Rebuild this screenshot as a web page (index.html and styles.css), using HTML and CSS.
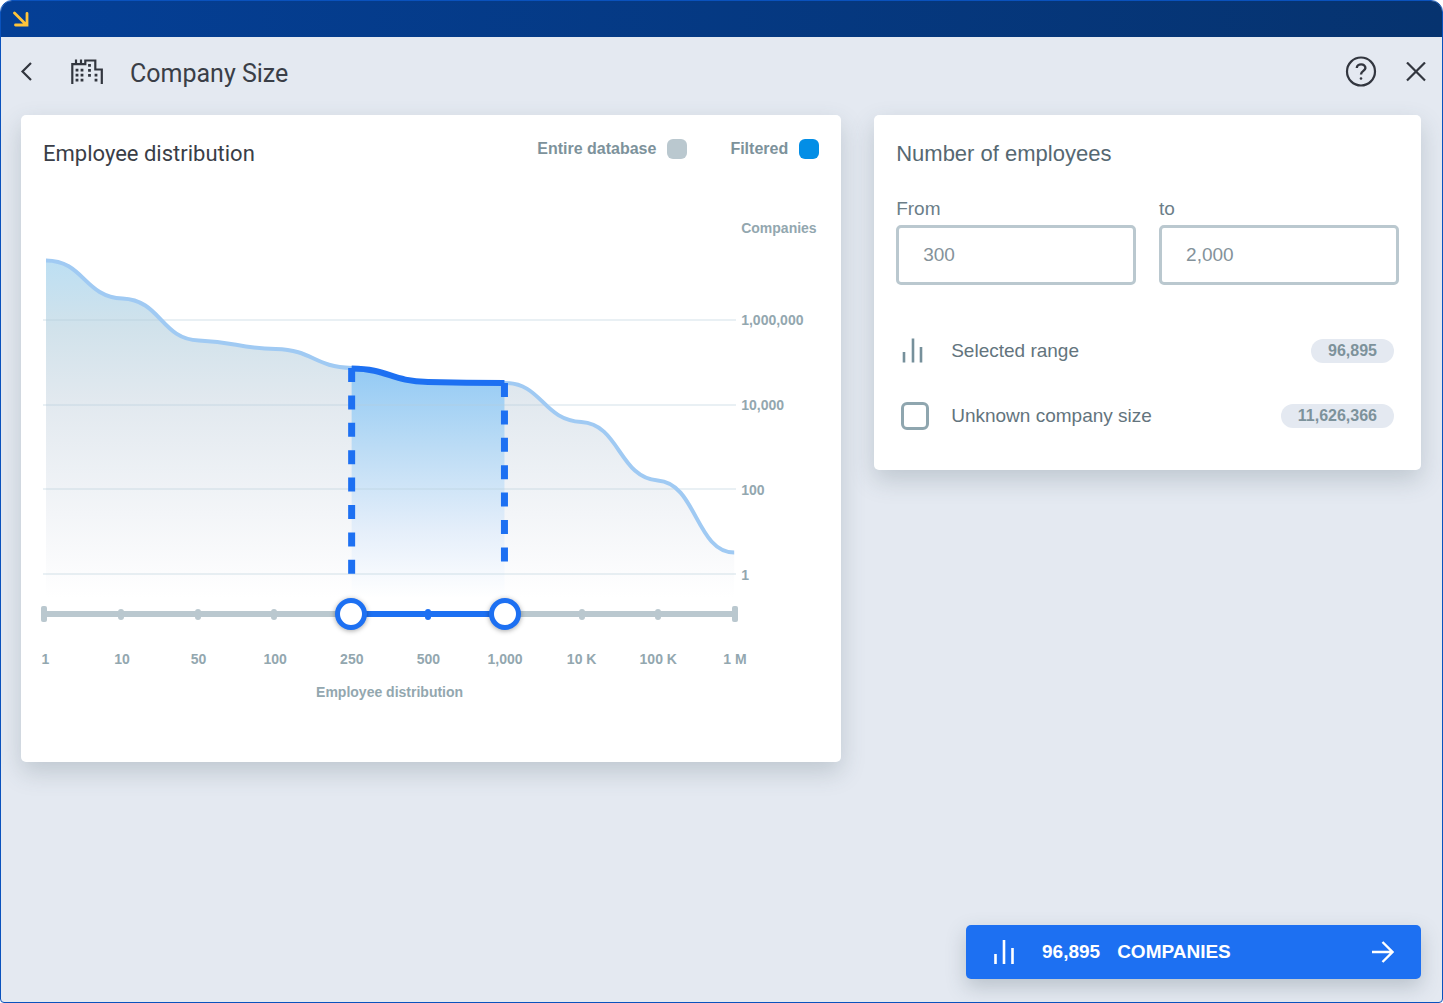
FILE: index.html
```
<!DOCTYPE html>
<html lang="en">
<head>
    <meta charset="UTF-8">
    <meta name="viewport" content="width=device-width, initial-scale=1.0">
    <title>Company Size</title>
    <link rel="stylesheet" href="styles.css">
</head>
<body>
    <div class="window">
        <div class="titlebar">
            <svg class="logo" width="16" height="16" viewBox="0 0 16 16">
                <path d="M1.500 2L12.500 13M2.500 14H14V2.500" fill="none" stroke="#ffc43a" stroke-width="2.800" stroke-linecap="round" />
            </svg>
        </div>
        <header class="header">
            <button type="button" class="icon-button" aria-label="Back">
                <svg width="14" height="20" viewBox="0 0 14 20">
                    <path d="M12 1L3.500 9.500L12 18" fill="none" stroke="#32363f" stroke-width="2.200" />
                </svg>
            </button>
            <svg class="buildings" width="34" height="28" viewBox="0 0 34 28">
                <path d="M2.300 26V6.200H15.300V2.500H25.300V11.500H31.800V26M6 1.500V6M11 1.500V6M15.300 1.500V6" fill="none" stroke="#32363f" stroke-width="2.200" />
                <path d="M7 10.700V24M12 10.700V24M19.500 6V19M26 15.700V24" fill="none" stroke="#32363f" stroke-width="2.800" stroke-dasharray="2.800 2.200" />
            </svg>
            <h1>Company Size</h1>
            <button type="button" class="icon-button help" aria-label="Help">
                <svg width="32" height="32" viewBox="0 0 32 32" fill="none" stroke="#32363f">
                    <circle cx="16" cy="15.500" r="14" stroke-width="2.200" />
                    <path d="M11.800 12C12 7 20.600 7.300 20.400 12.200C20.200 15.100 16 14.800 16 18.500" stroke-width="2.400" />
                    <circle cx="16" cy="22.500" r="1.300" fill="#32363f" stroke="none" />
                </svg>
            </button>
            <button type="button" class="icon-button" aria-label="Close">
                <svg width="20" height="20" viewBox="0 0 20 20">
                    <path d="M1 .5L19 18.500M19 .5L1 18.500" fill="none" stroke="#32363f" stroke-width="2.200" />
                </svg>
            </button>
        </header>
        <main class="content">
            <section class="card distribution">
                <div class="card-header">
                    <h2>Employee distribution</h2>
                    <ul class="legend">
                        <li>Entire database <span class="swatch"></span></li>
                        <li>Filtered <span class="swatch filtered"></span></li>
                    </ul>
                </div>
                <div class="chart">
                    <div class="plot">
                        <svg class="curve" viewBox="0 0 694 380" preserveAspectRatio="none">
                            <defs>
                                <linearGradient id="all" gradientUnits="userSpaceOnUse" x1="0" y1="42" x2="0" y2="380">
                                    <stop offset="0" stop-color="#bcdff3" />
                                    <stop offset="0.2" stop-color="#d1e2eb" />
                                    <stop offset="0.42" stop-color="#e2e9ef" />
                                    <stop offset="0.75" stop-color="#f3f5f8" />
                                    <stop offset="1" stop-color="#ffffff" />
                                </linearGradient>
                                <linearGradient id="range" gradientUnits="userSpaceOnUse" x1="0" y1="150" x2="0" y2="380">
                                    <stop offset="0" stop-color="#93caf4" />
                                    <stop offset="0.35" stop-color="#bcdcf5" />
                                    <stop offset="0.7" stop-color="#e4eefa" />
                                    <stop offset="1" stop-color="#ffffff" />
                                </linearGradient>
                            </defs>
                            <path fill="url(#all)" d="M3 42.500C41 42.500 41 79 79.500 80.500C118 82 118 121 156 122.500C194 124 194 130 233 131C271 132 271 149 309 150C347 151 347 163 385.500 164C424 165 424 165 462 165C500 165 500 202 539 204C577 206 577 260 615.500 262.500C654 265 654 334.500 692 334.500V380H3Z" />
                            <path fill="url(#range)" d="M309 150C347 151 347 163 385.500 164C424 165 424 165 462 165V380H309Z" />
                            <path class="gridlines" d="M0 102H694M0 187H694M0 271H694M0 356H694" />
                            <path class="line" d="M3 42.500C41 42.500 41 79 79.500 80.500C118 82 118 121 156 122.500C194 124 194 130 233 131C271 132 271 149 309 150C347 151 347 163 385.500 164C424 165 424 165 462 165C500 165 500 202 539 204C577 206 577 260 615.500 262.500C654 265 654 334.500 692 334.500" />
                            <path class="line selected" d="M309 150.500C347 151 347 163 385.500 164C424 165 424 165 462 165" />
                            <path class="bound" d="M309 150V357M462 165V344" />
                        </svg>
                        <div class="slider">
                            <div class="track">
                                <div class="track-range" style="left: 44.4%; width: 22.2%"></div>
                            </div>
                            <div class="ticks">
                                <span class="end"></span>
                                <span></span>
                                <span></span>
                                <span></span>
                                <span></span>
                                <span class="active"></span>
                                <span></span>
                                <span></span>
                                <span></span>
                                <span class="end"></span>
                            </div>
                            <input type="range" min="0" max="9" value="4" aria-label="Minimum employees">
                            <input type="range" min="0" max="9" value="6" aria-label="Maximum employees">
                        </div>
                        <ol class="x-axis">
                            <li>1</li>
                            <li>10</li>
                            <li>50</li>
                            <li>100</li>
                            <li>250</li>
                            <li>500</li>
                            <li>1,000</li>
                            <li>10 K</li>
                            <li>100 K</li>
                            <li>1 M</li>
                        </ol>
                        <p class="caption">Employee distribution</p>
                    </div>
                    <div class="y-axis">
                        <h3>Companies</h3>
                        <ol>
                            <li>1,000,000</li>
                            <li>10,000</li>
                            <li>100</li>
                            <li>1</li>
                        </ol>
                    </div>
                </div>
            </section>
            <section class="card employees">
                <h2>Number of employees</h2>
                <form class="range-form">
                    <div class="field">
                        <label for="from">From</label>
                        <input type="text" id="from" name="from" value="300">
                    </div>
                    <div class="field">
                        <label for="to">to</label>
                        <input type="text" id="to" name="to" value="2,000">
                    </div>
                </form>
                <div class="row">
                    <svg width="28" height="28" viewBox="0 0 28 28">
                        <path d="M3 15V25.500M12 1.500V25.500M20 10V25.500" fill="none" stroke="#76909b" stroke-width="2.600" />
                    </svg>
                    <span>Selected range</span>
                    <span class="badge">96,895</span>
                </div>
                <div class="row">
                    <input type="checkbox" id="unknown" name="unknown">
                    <label for="unknown">Unknown company size</label>
                    <span class="badge">11,626,366</span>
                </div>
            </section>
        </main>
        <footer class="footer">
            <button type="button" class="companies-button">
                <svg width="28" height="28" viewBox="0 0 28 28">
                    <path d="M4.500 16V26M13 2V26M21.500 10V26" fill="none" stroke="#ffffff" stroke-width="2.600" />
                </svg>
                <span>96,895</span>
                <span>COMPANIES</span>
                <svg class="arrow" width="22" height="22" viewBox="0 0 22 22">
                    <path d="M0 11H21M10.500 1L20.500 11L10.500 21" fill="none" stroke="#ffffff" stroke-width="2.400" />
                </svg>
            </button>
        </footer>
    </div>
</body>
</html>
```
FILE: styles.css
```
* {
    box-sizing: border-box;
}
body {
    margin: 0;
    font-family: "Liberation Sans", Arial, sans-serif;
    color: #566872;
    background-color: white;
}
h1, h2, h3, p, ul, ol {
    margin: 0;
    padding: 0;
    font-weight: normal;
    list-style: none;
}
svg {
    display: block;
    flex-shrink: 0;
}
.window {
    display: flex;
    flex-direction: column;
    min-height: 100vh;
    border: 1px solid #0a52bd;
    border-radius: 12px 12px 4px 4px;
    background-color: #e4e9f1;
    overflow: hidden;
}
.titlebar {
    height: 36px;
    padding: 10px 12px;
    background: linear-gradient(to right, #043f96, #06336f);
}
.header {
    display: flex;
    align-items: center;
    height: 78px;
    padding: 0 16px 8px 18px;
}
.icon-button {
    padding: 0;
    border: none;
    background: none;
    cursor: pointer;
}
.buildings {
    margin-left: 37px;
}
h1 {
    margin-left: 26px;
    padding-top: 4px;
    font-family: Roboto, sans-serif;
    font-size: 25px;
    line-height: 30px;
    color: #3a3e47;
}
.help {
    margin-left: auto;
    margin-right: 29px;
}
.content {
    display: grid;
    grid-template-columns: 3fr 2fr;
    gap: 33px;
    align-items: start;
    padding: 0 21px 0 20px;
}
.card {
    padding: 24px 22px;
    border-radius: 5px;
    background-color: white;
    box-shadow: 0 10px 24px rgba(60, 80, 90, 0.22);
}
h2 {
    font-size: 22px;
    line-height: 30px;
}
.distribution {
    padding-bottom: 60px;
}
.distribution h2 {
    font-family: Roboto, sans-serif;
    color: #3a3e47;
}
.card-header {
    display: flex;
    justify-content: space-between;
    align-items: flex-start;
}
.legend {
    display: flex;
    gap: 43px;
}
.legend li {
    display: flex;
    align-items: center;
    gap: 11px;
    font-size: 16px;
    font-weight: bold;
    line-height: 20px;
    color: #7d929b;
}
.swatch {
    width: 20px;
    height: 20px;
    border-radius: 6px;
    background-color: #bac8cf;
}
.swatch.filtered {
    background-color: #038ee6;
}
.chart {
    display: grid;
    grid-template-columns: 1fr 78px;
    gap: 5px;
    margin-top: 49px;
    line-height: 20px;
    color: #93a7af;
}
.chart h3, .chart li, .caption {
    font-size: 14px;
    font-weight: bold;
}
.curve {
    width: 100%;
    height: 380px;
}
.gridlines {
    fill: none;
    stroke: rgba(180, 202, 218, 0.4);
    stroke-width: 1.5;
}
.line {
    fill: none;
    stroke: #a0caf3;
    stroke-width: 4;
}
.line.selected {
    stroke: #1d70f2;
    stroke-width: 6;
}
.bound {
    fill: none;
    stroke: #1d70f2;
    stroke-width: 7;
    stroke-dasharray: 14 13.4;
}
.slider {
    position: relative;
    height: 32px;
    margin: 0 -2px;
    padding: 8px 0;
}
.track {
    position: absolute;
    top: 13px;
    left: 3px;
    right: 3px;
    height: 6px;
    background-color: #bac8cf;
}
.track-range {
    position: absolute;
    height: 6px;
    background-color: #1d70f2;
}
.ticks {
    position: relative;
    display: flex;
    justify-content: space-between;
    align-items: center;
    height: 16px;
}
.ticks span {
    width: 6px;
    height: 11px;
    border-radius: 3px;
    background-color: #bac8cf;
}
.ticks .end {
    height: 16px;
    border-radius: 2px;
}
.ticks .active {
    background-color: #1d70f2;
}
.slider input {
    position: absolute;
    top: 0;
    left: -13px;
    width: calc(100% + 26px);
    height: 32px;
    margin: 0;
    background: none;
    appearance: none;
    pointer-events: none;
}
.slider input::-webkit-slider-thumb {
    width: 32px;
    height: 32px;
    border: 5px solid #1d70f2;
    border-radius: 50%;
    background-color: white;
    box-shadow: 0 1px 5px rgba(0, 0, 0, 0.35);
    appearance: none;
    pointer-events: auto;
    cursor: pointer;
}
.x-axis {
    display: grid;
    grid-template-columns: repeat(10, 1fr);
    margin: 19px -37px 0 -36px;
    text-align: center;
}
.caption {
    margin-top: 13px;
    text-align: center;
}
.y-axis li {
    margin-bottom: 65px;
}
.y-axis h3 {
    margin-bottom: 72px;
}
.y-axis li:last-child {
    margin-bottom: 0;
}
.employees {
    padding-bottom: 40px;
    font-size: 19px;
    line-height: 24px;
}
.range-form {
    display: grid;
    grid-template-columns: 1fr 1fr;
    gap: 23px;
    margin: 28px 0 52px;
}
.field label {
    display: block;
    margin-bottom: 4px;
    color: #6b7e88;
}
.field input {
    width: 100%;
    height: 60px;
    padding: 0 24px;
    border: 3px solid #bac8cf;
    border-radius: 5px;
    font-family: inherit;
    font-size: 19px;
    color: #84929a;
}
.row {
    display: flex;
    align-items: center;
    gap: 22px;
    height: 28px;
    padding: 0 5px;
    color: #63747d;
}
.row + .row {
    margin-top: 37px;
}
.row input {
    width: 28px;
    height: 28px;
    margin: 0;
    border: 3px solid #8fa6af;
    border-radius: 6px;
    appearance: none;
}
.badge {
    margin-left: auto;
    padding: 0 17px;
    border-radius: 13px;
    background-color: #e4e9f1;
    font-size: 16px;
    font-weight: bold;
    line-height: 24px;
    color: #7d929b;
}
.footer {
    display: flex;
    justify-content: flex-end;
    margin-top: auto;
    padding: 0 21px 23px;
}
.companies-button {
    display: flex;
    align-items: center;
    gap: 17px;
    width: 455px;
    height: 54px;
    padding: 0 27px 0 25px;
    border: none;
    border-radius: 5px;
    background-color: #1d70f2;
    box-shadow: 0 8px 20px rgba(60, 80, 90, 0.25);
    font-family: inherit;
    font-size: 19px;
    font-weight: bold;
    color: white;
    cursor: pointer;
}
.companies-button svg:first-child {
    margin-right: 6px;
}
.arrow {
    margin-left: auto;
}
```
